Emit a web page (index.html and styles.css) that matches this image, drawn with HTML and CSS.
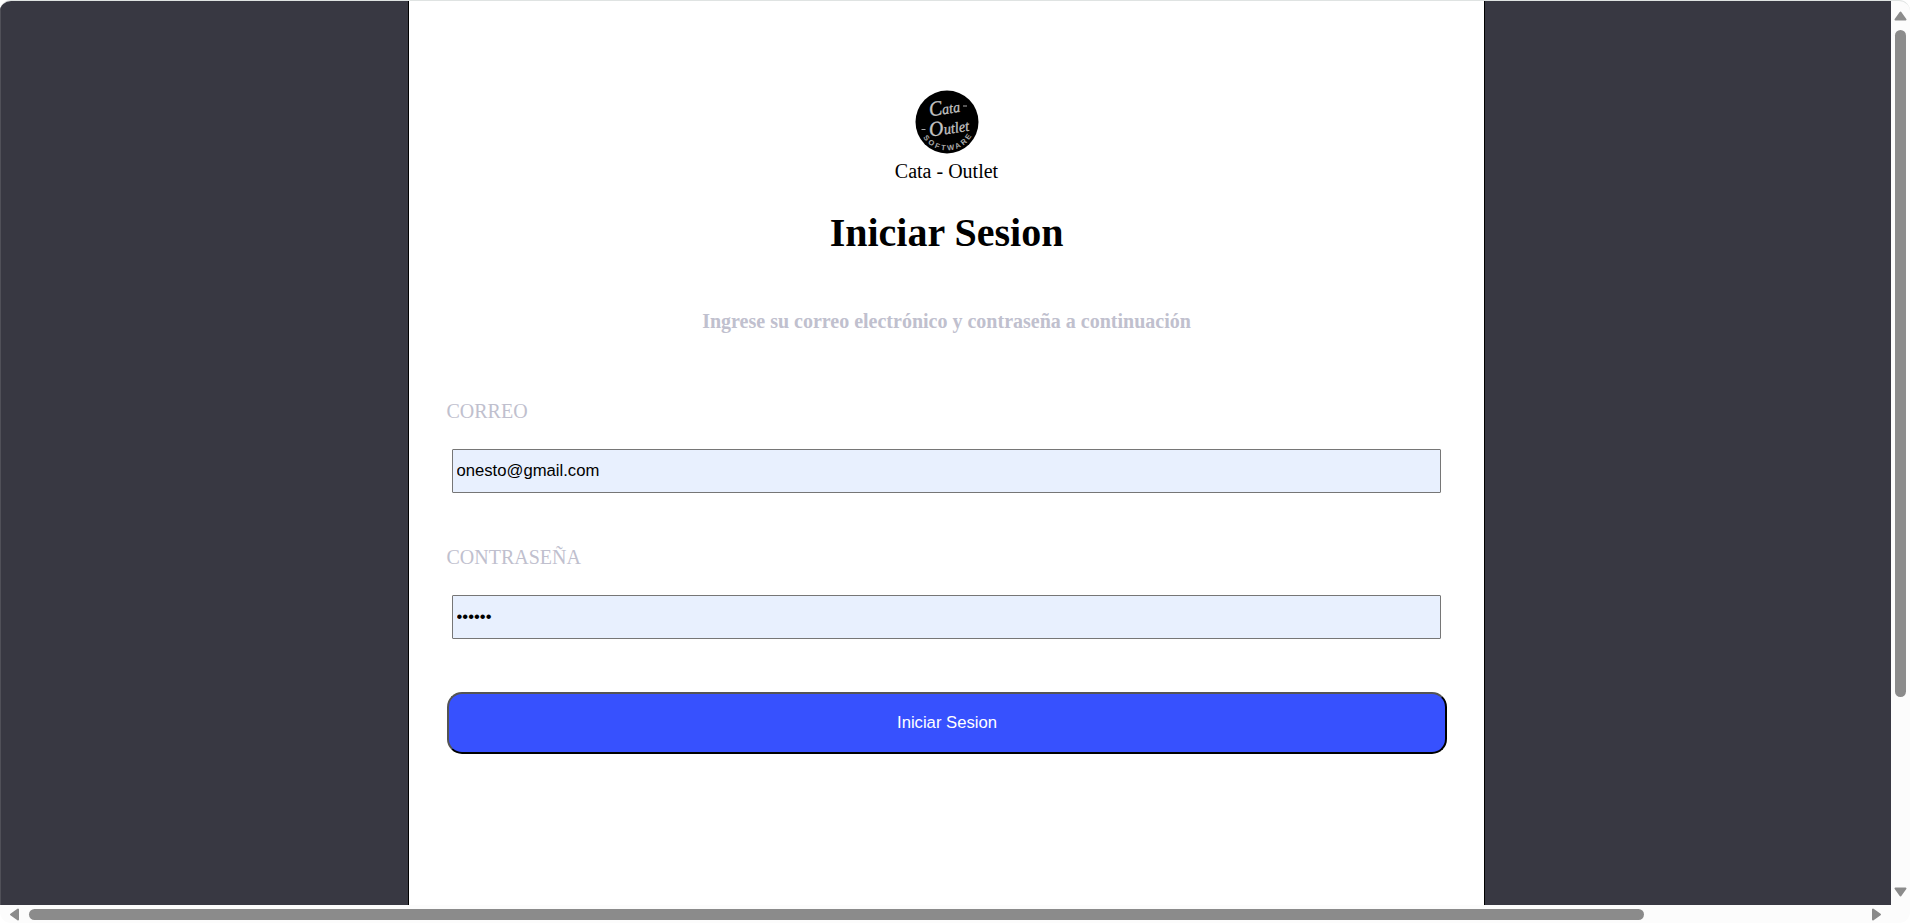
FILE: index.html
```html
<!DOCTYPE html>
<html lang="es">
<head>
<meta charset="utf-8">
<title>Iniciar Sesion</title>
<link rel="stylesheet" href="styles.css">
</head>
<body>
<div class="window">
  <main class="page">
    <form class="card">
      <svg class="logo" viewBox="0 0 64 64" aria-label="Cata Outlet Software">
        <defs><path id="arc" d="M7.500 46.500A28.500 28.500 0 0 0 57.500 44.500"/></defs>
        <circle cx="32" cy="32" r="31.500" fill="#000"/>
        <g class="script" transform="rotate(-9 32 32)">
          <text x="16" y="24" textLength="31" lengthAdjust="spacingAndGlyphs"><tspan class="cap">C</tspan>ata</text>
          <text x="13" y="44" textLength="40" lengthAdjust="spacingAndGlyphs"><tspan class="cap">O</tspan>utlet</text>
        </g>
        <path d="M48 16h4M6.500 39.500h4" stroke="#aaa" stroke-width="1.200"/>
        <text class="ring"><textPath href="#arc" startOffset="1" textLength="58">SOFTWARE</textPath></text>
      </svg>
      <div class="brand">Cata - Outlet</div>
      <h1 class="title">Iniciar Sesion</h1>
      <p class="hint">Ingrese su correo electrónico y contraseña a continuación</p>
      <label class="label" for="mail">CORREO</label>
      <input class="field" id="mail" type="text" value="onesto@gmail.com" spellcheck="false">
      <label class="label" for="pass">CONTRASEÑA</label>
      <input class="field" id="pass" type="password" value="123456">
      <button class="submit" type="button">Iniciar Sesion</button>
    </form>
  </main>
  <div class="vbar">
    <svg class="arrow-v" viewBox="0 0 13 12"><path d="M6.500 2.500L11.500 9.500H1.500Z"/></svg>
    <div class="thumb-v"></div>
    <svg class="arrow-v down" viewBox="0 0 13 12"><path d="M6.500 9.500L11.500 2.500H1.500Z"/></svg>
  </div>
  <div class="hbar">
    <svg class="arrow-h" viewBox="0 0 11 13"><path d="M2 6.500L9 1.500V11.500Z"/></svg>
    <div class="thumb-h"></div>
    <svg class="arrow-h right" viewBox="0 0 11 13"><path d="M9 6.500L2 1.500V11.500Z"/></svg>
  </div>
</div>
</body>
</html>
```

FILE: styles.css
```css
* { box-sizing: border-box; }
html, body { height: 100%; }
body {
  margin: 0;
  overflow: hidden;
  background: #fff;
  font: 20px/23px "Liberation Serif", "Times New Roman", serif;
  color: #000;
}
.window {
  display: grid;
  grid-template-columns: 1891px 19px;
  grid-template-rows: 904px 18px;
  width: 1910px;
  height: 923px;
  border-top: 1px solid #dfe3e2;
  border-radius: 11px;
  overflow: hidden;
  background: #fcfcfc;
}
.page {
  display: flex;
  padding-left: 407px;
  border-left: 1px solid #505058;
  background: #383842;
  overflow: hidden;
}
.card {
  display: flex;
  flex-direction: column;
  width: 1077px;
  padding: 89px 37px 0 38px;
  border: 1px solid #000;
  border-width: 0 1px;
  background: #fff;
}
.logo { width: 64px; height: 64px; margin-right: 1px; align-self: center; }
.script {
  font: italic 15px "Liberation Serif", serif;
  fill: #c4c4c4;
  stroke: #c4c4c4;
  stroke-width: .3;
}
.cap { font-size: 21px; }
.ring { font: bold 7.5px "Liberation Sans", sans-serif; fill: #aaa; }
.brand { margin-top: 6px; padding-right: 1px; text-align: center; }
.title { margin: 27px 0 0; padding-right: 1px; font-size: 40px; line-height: 46px; text-align: center; }
.hint { margin: 54px 0 67px; padding-right: 1px; font-weight: bold; text-align: center; color: #c0c0ce; }
.label { color: #c0c0ce; margin-left: -.5px; }
.field {
  height: 44px;
  margin: 26px 6px 53px 5px;
  padding: 1px 3px 1px 3.5px;
  border: 1px solid #767676;
  border-radius: 1px;
  background: #e8f0fe;
  font: 16.667px "Liberation Sans", Arial, sans-serif;
  color: #000;
}
.submit {
  height: 62px;
  border: 2px outset #000;
  border-radius: 15px;
  background: #3751fe;
  font: 16.667px "Liberation Sans", Arial, sans-serif;
  color: #fff;
}
.vbar { display: flex; flex-direction: column; align-items: center; padding: 9px 0 7px; }
.hbar { display: flex; align-items: center; padding: 1px 0 0 9px; }
.arrow-v { width: 13px; height: 12px; }
.arrow-h { width: 11px; height: 13px; }
.arrow-v path, .arrow-h path { fill: #8b8b8b; stroke: #8b8b8b; stroke-width: 2; stroke-linejoin: round; }
.thumb-v { width: 11px; height: 667px; margin-top: 8px; border-radius: 6px; background: #8b8b8b; }
.thumb-h { width: 1615px; height: 11px; margin-left: 9px; border-radius: 6px; background: #8b8b8b; }
.down { margin-top: auto; }
.right { margin-left: auto; margin-right: 9px; }
```
